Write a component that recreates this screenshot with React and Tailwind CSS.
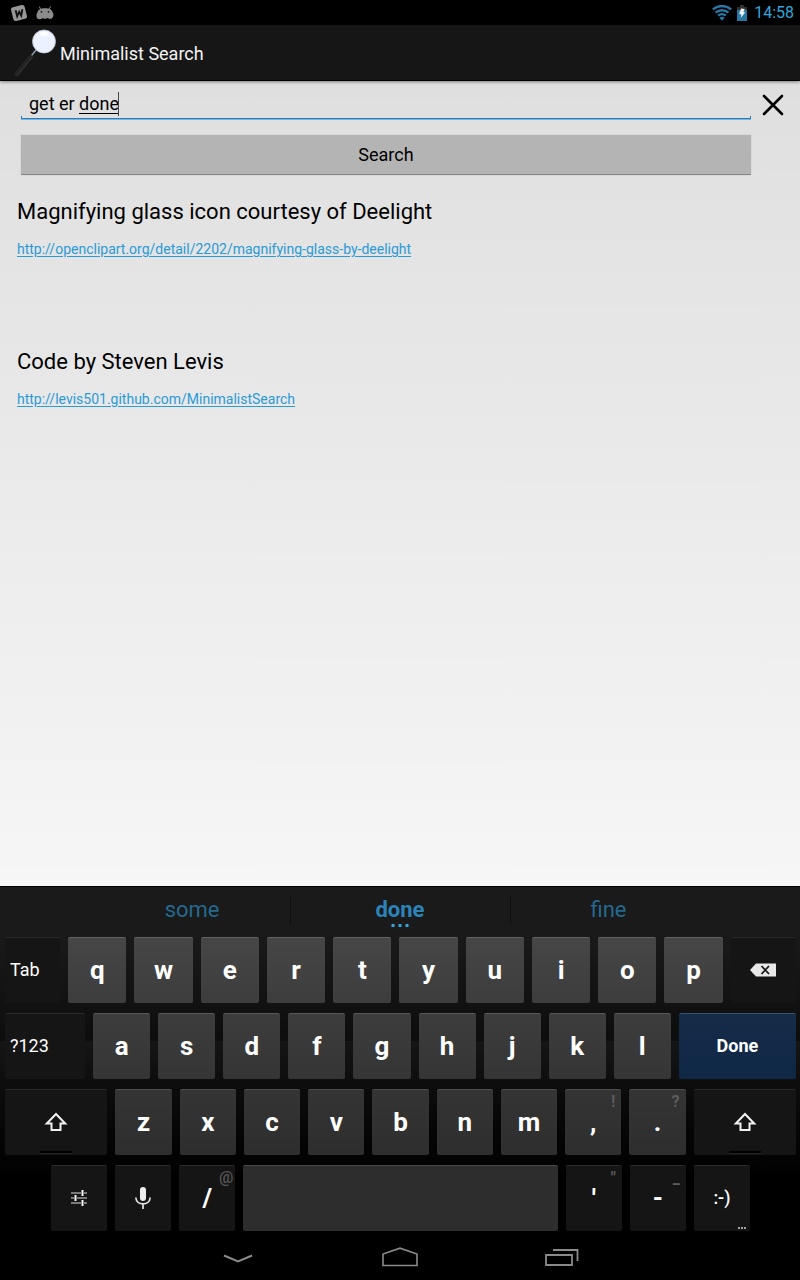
import React from "react";

const LETTERS_TOP = ["q", "w", "e", "r", "t", "y", "u", "i", "o", "p"];
const LETTERS_HOME = ["a", "s", "d", "f", "g", "h", "j", "k", "l"];
const LETTERS_BOTTOM = ["z", "x", "c", "v", "b", "n", "m"];

const KEY = "relative flex h-[66px] min-w-0 items-center justify-center rounded-[2px] border-t pb-px text-white";
const DARK = "border-[#2b2b2b] bg-[#151515]";
const TONES = {
  top: "border-[#646464] bg-linear-to-b from-[#464646] to-[#3d3d3d]",
  home: "border-[#585858] bg-linear-to-b from-[#3d3d3d] to-[#353535]",
  bottom: "border-[#4e4e4e] bg-linear-to-b from-[#343434] to-[#2e2e2e]",
  space: "border-[#4a4a4a] bg-[#2d2d2d]",
  dark: DARK,
};

function LetterKey({ tone, children, hint }) {
  return (
    <button type="button" className={`${KEY} ${TONES[tone]} text-[26px] leading-8 font-bold`}>
      {children}
      {hint && <span className="absolute top-0 right-1.5 text-[16px] leading-6 font-bold text-[#5c5c5c]">{hint}</span>}
    </button>
  );
}

function ShiftKey({ label }) {
  return (
    <button type="button" aria-label={label} className={`${KEY} ${DARK}`}>
      <svg width="24" height="20" viewBox="0 0 24 20" fill="none" stroke="#f2f2f2" strokeWidth="2">
        <path d="M12 2L2.8 11.5H7.5V18H16.5V11.5H21.2Z" />
      </svg>
      <span className="absolute bottom-px left-1/2 h-[3px] w-8 -translate-x-1/2 border-b border-[#222222] bg-black" />
    </button>
  );
}

function StatusBar() {
  return (
    <div className="flex h-[25px] items-center justify-between bg-black pr-1.5 pl-[10px]">
      <div className="flex items-center gap-2">
        <svg width="18" height="18" viewBox="0 0 18 18">
          <rect x="2" y="2" width="14" height="14" rx="2.5" fill="#969696" transform="rotate(-14 9 9)" />
          <path d="M5.6 6.2L7.2 12.2L9.2 7.8L11.2 11.4L12.4 5.2" fill="none" stroke="#111111" strokeWidth="1.9" />
        </svg>
        <svg width="18" height="14" viewBox="0 0 18 14">
          <path d="M4.8 3.4L3.2 .5M13 3.2L14.6 .3" stroke="#8c8c8c" strokeWidth="1" />
          <path d="M1.2 7C1.6 3.8 4.6 2.2 9 2.2S16.2 3.6 16.6 6.6C18 8 17.6 11.6 15.6 12.6C14.2 13.2 12.8 12.8 12 12C10 12.8 7.6 12.8 6.2 12.2C5 13.4 2.6 13.6 1.4 12.4C.2 11 .2 8.4 1.2 7Z" fill="#8c8c8c" />
          <circle cx="5.5" cy="5.8" r=".9" fill="#111111" />
          <circle cx="12.5" cy="5.8" r=".9" fill="#111111" />
        </svg>
      </div>
      <div className="flex items-center">
        <svg width="20" height="16" viewBox="0 0 20 16" fill="none" stroke="#2878a6" strokeWidth="2.5">
          <path d="M.9 4.4C6 0 14 0 19.1 4.4" />
          <path d="M3.6 7.6C7.4 4.3 12.6 4.3 16.4 7.6" />
          <path d="M6.2 10.6C8.4 8.7 11.6 8.7 13.8 10.6" />
          <path d="M7.4 12.8C9 11.5 11 11.5 12.6 12.8L10 15.8Z" fill="#2878a6" stroke="none" />
        </svg>
        <svg className="ml-1" width="12" height="16" viewBox="0 0 12 16">
          <path d="M1 2H4V0H8V2H11V5H1Z" fill="#303030" />
          <rect x="1" y="5" width="10" height="11" fill="#2878a6" />
          <path d="M5 3.5L8.8 4L7.4 7L9.2 7.4L4.6 13L5.4 9.4L3.2 9Z" fill="#f2f2f2" />
        </svg>
        <time className="ml-1.5 text-[16px] leading-6 text-[#33a5dc]">14:58</time>
      </div>
    </div>
  );
}

function ActionBar() {
  return (
    <header className="relative flex h-14 items-center border-b border-black bg-[#161616] pl-3 shadow-[0_1px_3px_rgba(0,0,0,0.45)]">
      <svg width="48" height="52" viewBox="0 0 48 52">
        <path d="M19.5 28.5L24.5 22.5" stroke="#91a0b4" strokeWidth="1.4" />
        <path d="M19.5 28.5L3 48.5" stroke="#242424" strokeWidth="3.6" />
        <path d="M21 29.5L5 49" stroke="#454545" strokeWidth=".8" />
        <circle cx="32" cy="14.5" r="11.5" fill="#ecf1ff" stroke="#b9bfca" strokeWidth=".8" />
        <ellipse cx="32" cy="7" rx="4" ry="2.5" fill="#ffffff" />
      </svg>
      <h1 className="pt-0.5 text-[18px] leading-6 text-[#f3f3f3]">Minimalist Search</h1>
    </header>
  );
}

function Credit({ title, url }) {
  return (
    <section>
      <h2 className="text-[22px] leading-8 text-black">{title}</h2>
      <p className="mt-[11px] text-[14px] leading-5">
        <a href={url} className="text-[#2a9bd7] underline underline-offset-2">{url}</a>
      </p>
    </section>
  );
}

function SearchForm() {
  return (
    <form className="grid grid-cols-[1fr_49px] gap-y-[15px] pl-[21px]" onSubmit={(e) => e.preventDefault()}>
      <div className="relative">
        <input
          type="text"
          aria-label="Search terms"
          defaultValue="get er done"
          className="block h-[39px] w-full bg-transparent px-2 pt-1.5 pb-0 text-[18px] leading-6 text-black outline-none"
        />
        <span className="pointer-events-none absolute bottom-0 left-0 h-1 w-full border-x border-[#1f7fc0]" />
        <span className="pointer-events-none absolute bottom-0 left-0 h-0.5 w-full border-t border-[#1f7fc0] bg-[#7db4da]" />
        <span className="pointer-events-none absolute bottom-[6px] left-[58px] h-px w-10 bg-black" />
        <span className="pointer-events-none absolute bottom-1 left-[97px] h-6 w-px bg-[#444444]" />
      </div>
      <button type="reset" aria-label="Clear" className="flex items-center justify-center pt-2 pr-1.5">
        <svg width="22" height="22" viewBox="0 0 22 22" stroke="#000000" strokeWidth="2.6" strokeLinecap="round">
          <path d="M2 2L20 20M20 2L2 20" />
        </svg>
      </button>
      <button
        type="submit"
        className="h-10 rounded-[1px] border-b border-[#858585] bg-[#b4b4b4] pt-px text-[18px] leading-6 text-black shadow-[0_0_1px_rgba(0,0,0,0.4)]"
      >
        Search
      </button>
    </form>
  );
}

function Keyboard() {
  return (
    <div className="relative bg-black pb-px">
      <div className="absolute inset-x-0 top-0 h-[155px] bg-linear-to-b from-[#1a1a1a] from-30% to-[#0d0d0d]" />
      <div className="absolute inset-x-0 top-[155px] h-[132px] bg-linear-to-b from-[#151515] to-[#020202]" />
      <div className="relative">
        <div className="grid h-[51px] grid-cols-[1fr_221px_1fr] border-t border-black pb-1 text-[22px] leading-6">
          <button type="button" className="flex items-center justify-end pr-[70px] text-[#24698f]">some</button>
          <button type="button" className="relative my-2 flex items-center justify-center border-x border-[#101010] font-bold text-[#2c83b8]">
            done
            <span className="absolute -bottom-0.5 left-1/2 flex -translate-x-1/2 gap-1">
              <span className="size-[3px] bg-[#33a5dc]" />
              <span className="size-[3px] bg-[#33a5dc]" />
              <span className="size-[3px] bg-[#33a5dc]" />
            </span>
          </button>
          <button type="button" className="flex items-center pl-20 text-[#24698f]">fine</button>
        </div>
        <div className="flex flex-col gap-[10px] pr-1 pl-[5px]">
          <div className="grid grid-cols-[55fr_repeat(10,58fr)_65fr] gap-2">
            <button type="button" className={`${KEY} ${DARK} text-[18px] leading-6`}>
              <span className="w-full pl-[5px] text-left">Tab</span>
            </button>
            {LETTERS_TOP.map((l) => <LetterKey key={l} tone="top">{l}</LetterKey>)}
            <button type="button" aria-label="Backspace" className={`${KEY} ${DARK}`}>
              <svg width="26" height="14" viewBox="0 0 26 14">
                <path d="M0 7L6 .5H26V13.5H6Z" fill="#e8e8e8" />
                <path d="M11.5 3L19 11M19 3L11.5 11" stroke="#161616" strokeWidth="1.8" />
              </svg>
            </button>
          </div>
          <div className="grid grid-cols-[80fr_repeat(9,57fr)_117fr] gap-2">
            <button type="button" className={`${KEY} ${DARK} text-[18px] leading-6`}>
              <span className="w-full pl-[5px] text-left">?123</span>
            </button>
            {LETTERS_HOME.map((l) => <LetterKey key={l} tone="home">{l}</LetterKey>)}
            <button type="button" className={`${KEY} border-[#355570] bg-linear-to-b from-[#152c49] to-[#0f2845] text-[18px] leading-6 font-bold`}>
              Done
            </button>
          </div>
          <div className="grid grid-cols-[102fr_repeat(9,56fr)_102fr] gap-2">
            <ShiftKey label="Left shift" />
            {LETTERS_BOTTOM.map((l) => <LetterKey key={l} tone="bottom">{l}</LetterKey>)}
            <LetterKey tone="bottom" hint="!">,</LetterKey>
            <LetterKey tone="bottom" hint="?">.</LetterKey>
            <ShiftKey label="Right shift" />
          </div>
          <div className="grid grid-cols-[repeat(3,56fr)_314fr_repeat(3,56fr)] gap-2 px-[46px]">
            <button type="button" aria-label="Input settings" className={`${KEY} ${DARK}`}>
              <svg width="18" height="18" viewBox="0 0 18 18" fill="none">
                <path d="M1 4H11M14 4H17M1 9H4M7 9H17M1 14H11M14 14H17" stroke="#9c9c9c" strokeWidth="1.6" />
                <path d="M12.5 1V7M5.5 6V12M12.5 11V17" stroke="#f7f7f7" strokeWidth="2" />
              </svg>
            </button>
            <button type="button" aria-label="Voice input" className={`${KEY} ${DARK}`}>
              <svg width="18" height="22" viewBox="0 0 18 22" fill="none">
                <rect x="6" y="0" width="6" height="14" rx="3" fill="#eeeeee" />
                <path d="M1.8 10.5C2.3 19 15.7 19 16.2 10.5M9 17V22" stroke="#e5e5e5" strokeWidth="1.7" />
              </svg>
            </button>
            <button type="button" className={`${KEY} ${DARK} text-[26px] leading-8 font-bold`}>
              /
              <span className="absolute top-0 right-0.5 text-[16px] leading-6 font-medium text-[#555555]">@</span>
            </button>
            <button type="button" aria-label="Space" className={`${KEY} ${TONES.space}`} />
            <LetterKey tone="dark" hint={'"'}>'</LetterKey>
            <LetterKey tone="dark" hint="_">-</LetterKey>
            <button type="button" className={`${KEY} ${DARK} text-[18px] leading-6 font-medium`}>
              :-)
              <span className="absolute right-1 bottom-0.5 flex gap-px">
                <span className="size-0.5 bg-[#a0a0a0]" />
                <span className="size-0.5 bg-[#a0a0a0]" />
                <span className="size-0.5 bg-[#a0a0a0]" />
              </span>
            </button>
          </div>
        </div>
      </div>
    </div>
  );
}

function NavBar() {
  return (
    <nav className="flex h-12 items-center justify-center gap-[126px] bg-black pt-0.5">
      <button type="button" aria-label="Hide keyboard" className="flex w-9 justify-center">
        <svg width="30" height="22" viewBox="0 0 30 22" fill="none" stroke="#8a8a8a" strokeWidth="2">
          <path d="M1 9.5L15 15.5L29 9.5" />
        </svg>
      </button>
      <button type="button" aria-label="Home" className="flex w-9 justify-center">
        <svg width="36" height="22" viewBox="0 0 36 22" fill="none" stroke="#8a8a8a" strokeWidth="1.6">
          <path d="M1 19.5V8L18 2.2L35 8V19.5Z" />
        </svg>
      </button>
      <button type="button" aria-label="Recent apps" className="flex w-9 justify-center">
        <svg width="34" height="20" viewBox="0 0 34 20" fill="none" stroke="#8a8a8a" strokeWidth="1.8">
          <path d="M1 8H27V18H1Z" />
          <path d="M8 3H32.5V14" />
        </svg>
      </button>
    </nav>
  );
}

export default function App() {
  return (
    <div className="flex min-h-screen flex-col font-['Roboto',sans-serif]">
      <StatusBar />
      <ActionBar />
      <main className="flex-1 bg-linear-to-b from-[#dfdfdf] to-[#f6f6f6]">
        <SearchForm />
        <div className="flex flex-col gap-[87px] px-[17px] pt-[21px]">
          <Credit title="Magnifying glass icon courtesy of Deelight" url="http://openclipart.org/detail/2202/magnifying-glass-by-deelight" />
          <Credit title="Code by Steven Levis" url="http://levis501.github.com/MinimalistSearch" />
        </div>
      </main>
      <Keyboard />
      <NavBar />
    </div>
  );
}
